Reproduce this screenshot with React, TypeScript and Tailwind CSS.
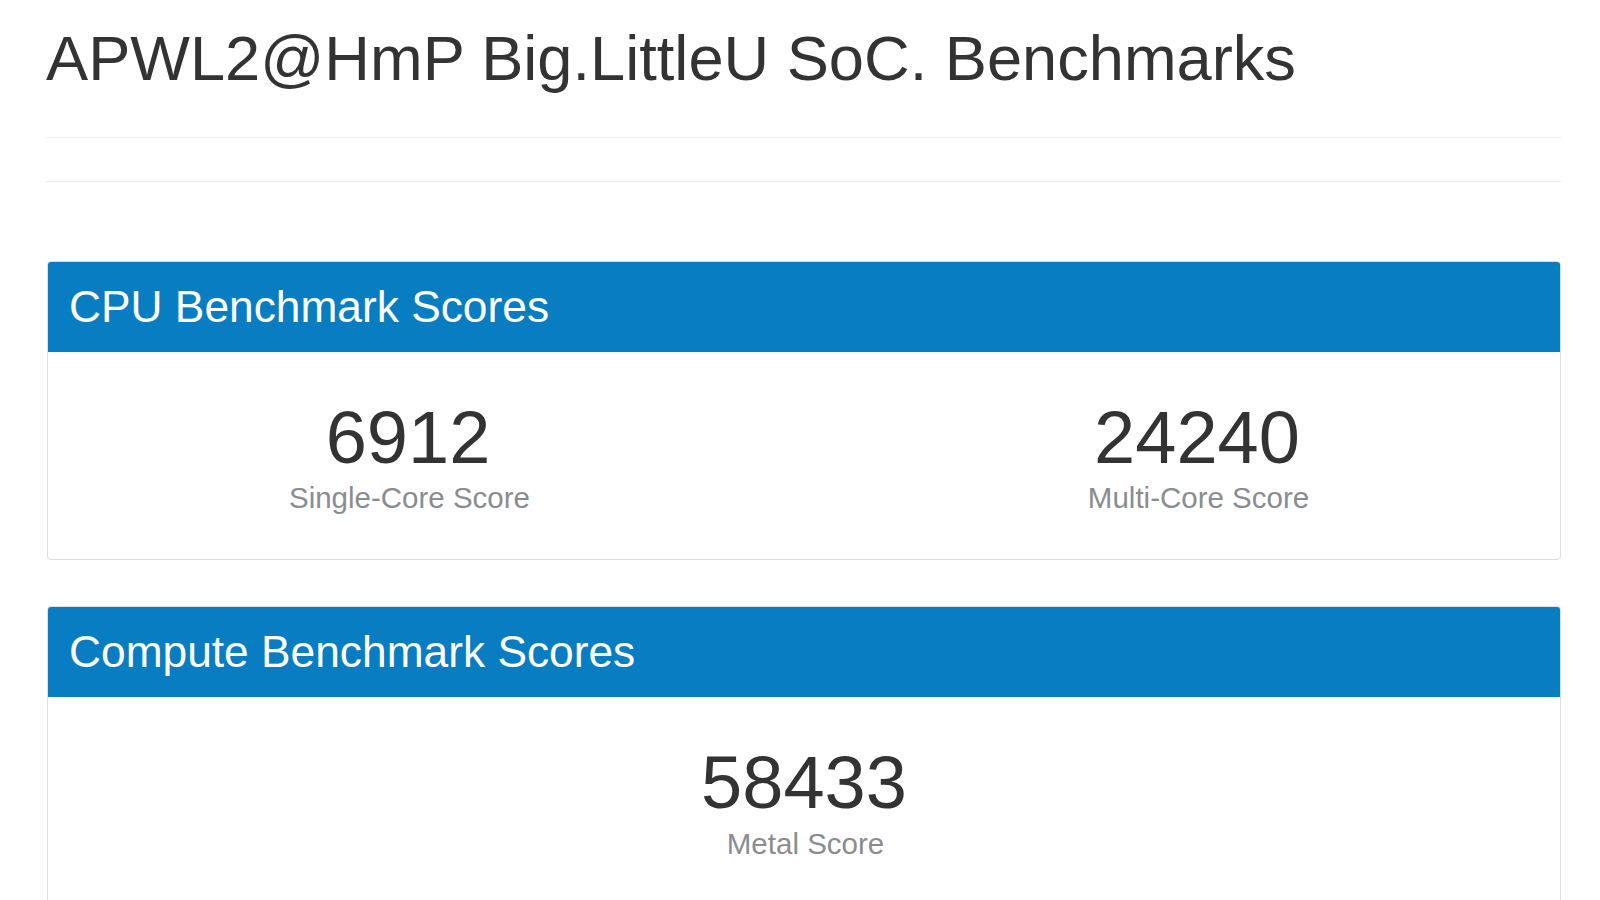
const FONT = "font-['Liberation_Sans',Arial,sans-serif]";

type Score = {
  value: string;
  label: string;
};

function ScoreBlock({ score }: { score: Score }) {
  return (
    <div className="flex w-[500px] flex-col items-center">
      <div className="text-[74px] leading-[1.1] text-[#333333]">{score.value}</div>
      <div className="mt-[4px] pl-[3px] text-[29.5px] leading-[1.1] text-[#8a8d90]">{score.label}</div>
    </div>
  );
}

function BenchCard({ title, scores }: { title: string; scores: Score[] }) {
  return (
    <div className="overflow-hidden rounded-[4px] border border-[#dddddd] bg-white">
      <div className="bg-[#087dc1] px-[21px] text-[44.3px] leading-[90px] text-white">
        {title}
      </div>
      {scores.length > 1 ? (
        <div className="flex justify-between pt-[45px] pb-[45px] pl-[110px] pr-[113px]">
          {scores.map((s) => (
            <ScoreBlock key={s.label} score={s} />
          ))}
        </div>
      ) : (
        <div className="flex justify-center pt-[45px] pb-[45px]">
          <ScoreBlock score={scores[0]} />
        </div>
      )}
    </div>
  );
}

export default function App() {
  return (
    <div className={`min-h-screen bg-white pl-[46px] pr-[39px] pt-[24px] ${FONT}`}>
      <h1 className="text-[63.2px] font-normal leading-[1.1] text-[#333333]">
        APWL2@HmP Big.LittleU SoC. Benchmarks
      </h1>
      <div className="mt-[43px] h-[44px] border-t border-[#eeeeee]" />
      <div className="border-t border-[#eeeeee]" />

      <div className="mt-[79px] flex flex-col gap-[46px] pl-[1px]">
        <BenchCard
          title="CPU Benchmark Scores"
          scores={[
            { value: "6912", label: "Single-Core Score" },
            { value: "24240", label: "Multi-Core Score" },
          ]}
        />
        <BenchCard
          title="Compute Benchmark Scores"
          scores={[{ value: "58433", label: "Metal Score" }]}
        />
      </div>
    </div>
  );
}
